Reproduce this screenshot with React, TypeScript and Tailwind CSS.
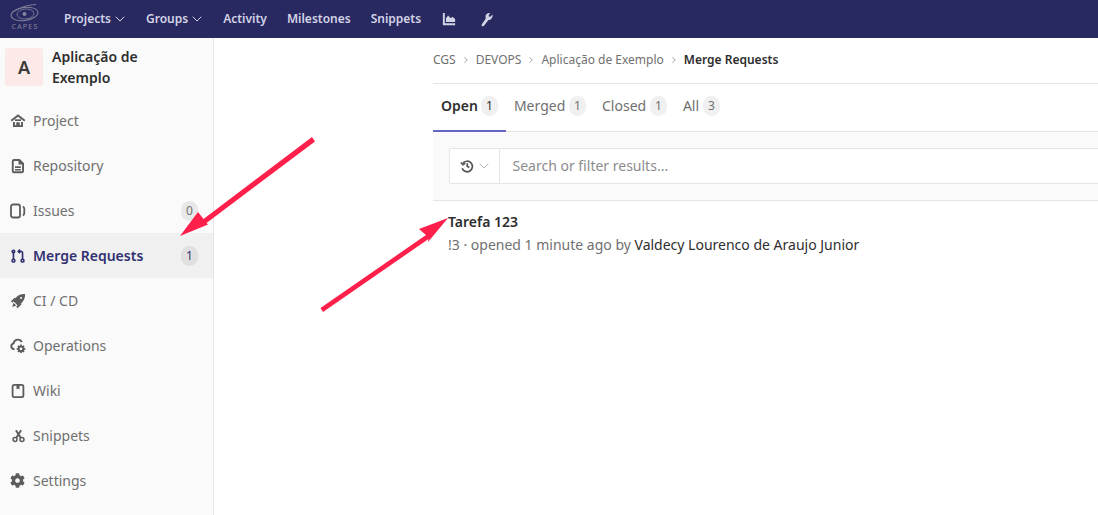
import { ChevronDown, ChevronRight } from 'lucide-react'
import { FaCog } from 'react-icons/fa'
import type { ReactNode } from 'react'

const font = "font-['Noto_Sans',sans-serif]"

const HomeIcon = () => (
  <svg width="16" height="16" viewBox="0 0 16 16" fill="currentColor">
    <path d="M8 1.200.6 7l1.200 1.500L8 3.800l6.200 4.700L15.400 7 8 1.200Z" />
    <path d="M3 9h1.900v3.200H6.300V9.300h3.400v2.900h1.400V9H13v5H3V9Z" />
    <path d="M5 6.300h6v1.700H5z" />
  </svg>
)

const DocIcon = () => (
  <svg width="16" height="16" viewBox="0 0 16 16" fill="currentColor">
    <path d="M4 1h5.800L14 5.200V13a2.200 2.200 0 0 1-2.200 2.200H4A2.200 2.200 0 0 1 1.800 13V3.200A2.200 2.200 0 0 1 4 1Zm0 1.900a.4.400 0 0 0-.3.300V13a.4.400 0 0 0 .3.300h7.800a.4.400 0 0 0 .3-.3V6.500H8.500V2.900H4ZM5 8.200h5.800v1.700H5V8.200Zm0 2.700h5.800v1.500H5v-1.500Z" fillRule="evenodd" />
  </svg>
)

const IssuesIcon = () => (
  <svg width="16" height="16" viewBox="0 0 16 16" fill="none" stroke="currentColor" strokeWidth="1.800">
    <rect x="1" y="1.500" width="9" height="13" rx="2" />
    <path d="M12.800 3.500c1 .5 1.500 1.200 1.500 2.200v4.600c0 1-.5 1.700-1.500 2.200" />
  </svg>
)

const MergeIcon = () => (
  <svg width="14" height="16" viewBox="0 0 16 16" fill="none" stroke="currentColor" strokeWidth="1.900" className="ml-px">
    <circle cx="2.800" cy="13.300" r="1.600" />
    <circle cx="13.200" cy="13.300" r="1.600" />
    <circle cx="2.800" cy="2.800" r="1.400" />
    <path d="M2.800 4.200v7.500M13.200 11.700V4.500a1.700 1.700 0 0 0-1.700-1.700H8.500" />
    <path d="M10.300.8 8.300 2.800l2 2" />
  </svg>
)

const RocketIcon = () => (
  <svg width="16" height="16" viewBox="0 0 16 16" fill="currentColor">
    <path d="M15 1c-3.500-.3-6.500 1-8.500 3L3 7.800 8.200 13 12 9.500c2-2 3.300-5 3-8.500Zm-4 3a1 1 0 1 1 0 2 1 1 0 0 1 0-2Z" fillRule="evenodd" />
    <path d="M.8 8.500 4.500 4.800l1.300.2L2.700 9.800.8 8.500ZM6.200 13.300l5-3.200.2 1.300L7.500 15.200 6.200 13.300ZM3.500 9.800 6.200 12.500 2.300 14 3.500 9.800Z" />
  </svg>
)

const CloudGearIcon = () => (
  <svg width="16" height="16" viewBox="0 0 16 16">
    <path d="M4.500 11.200H4a3 3 0 0 1-.4-5.900A4.300 4.300 0 0 1 11.800 4.200" fill="none" stroke="currentColor" strokeWidth="1.900" />
    <circle cx="11" cy="10.800" r="2.400" fill="none" stroke="currentColor" strokeWidth="2" />
    <path d="M11 6.500v1.500M11 13.600v1.500M6.700 10.800h1.500M13.800 10.800h1.500M8 7.800l1 1M13 12.800l1 1M8 13.800l1-1M13 8.800l1-1" stroke="currentColor" strokeWidth="1.700" />
  </svg>
)

const BookIcon = () => (
  <svg width="16" height="16" viewBox="0 0 16 16" fill="none" stroke="currentColor">
    <rect x="2.600" y="1.900" width="10.800" height="12.200" rx="1.600" strokeWidth="1.800" />
    <path d="M6.500 2h3v4.500L8 5.400 6.500 6.500z" fill="currentColor" stroke="none" />
  </svg>
)

const ScissorsIcon = () => (
  <svg width="13" height="14" viewBox="0 0 16 16" fill="none" stroke="currentColor" strokeWidth="1.900" className="ml-[1.500px]">
    <circle cx="3.700" cy="12.300" r="2.400" />
    <circle cx="12.300" cy="12.300" r="2.400" />
    <path d="M4.800 1 10.800 10.300M11.200 1 5.200 10.300" strokeWidth="2.300" />
  </svg>
)

const ChartIcon = () => (
  <svg width="14" height="14" viewBox="0 0 16 16" fill="currentColor">
    <path d="M1 1h2.200v11.800H15V15H1V1Z" />
    <path d="M4.500 11.500V7l2.500-3 3 3 2-1.500 3 2.500v3.500H4.500Z" />
  </svg>
)

const WrenchIcon = () => (
  <svg width="12" height="15" viewBox="0 0 12 15" fill="currentColor">
    <path d="M11.500 2.500 9 5 7.500 4 9 1C7 .5 4.500 2 4.500 4.500c0 1 .3 1.500.3 2L.7 12.500c-.7 1.300 1 2.500 2.100 1.500L7.500 8c2.500.3 4.500-2.500 4-5.500Z" />
  </svg>
)

const HistoryIcon = () => (
  <svg width="14" height="14" viewBox="0 0 16 16" fill="none" stroke="currentColor" strokeWidth="2">
    <path d="M3.200 5.200A6 6 0 1 1 2.500 10.500" />
    <path d="M.9 3.900 3.400 6.500 6.100 4.900" strokeWidth="1.700" />
    <path d="M8.300 4.800V8.300l2.400 1.400" />
  </svg>
)

const CapesLogo = () => (
  <svg width="30" height="18" viewBox="0 0 30 18" fill="none" className="text-[#83839c]" stroke="currentColor">
    <ellipse cx="14.500" cy="10" rx="13.500" ry="6.500" strokeWidth="1" transform="rotate(-8 14.500 10)" />
    <ellipse cx="15.500" cy="10" rx="8.500" ry="5" strokeWidth="0.800" transform="rotate(-5 15.500 10)" />
    <path d="M5 7C12 2 20 1 26 .5" strokeWidth="0.900" />
    <circle cx="14.500" cy="10" r="2" fill="currentColor" stroke="none" />
  </svg>
)

const navItems: { label: string; icon: ReactNode; count?: number; active?: boolean }[] = [
  { label: 'Project', icon: <HomeIcon /> },
  { label: 'Repository', icon: <DocIcon /> },
  { label: 'Issues', icon: <IssuesIcon />, count: 0 },
  { label: 'Merge Requests', icon: <MergeIcon />, count: 1, active: true },
  { label: 'CI / CD', icon: <RocketIcon /> },
  { label: 'Operations', icon: <CloudGearIcon /> },
  { label: 'Wiki', icon: <BookIcon /> },
  { label: 'Snippets', icon: <ScissorsIcon /> },
  { label: 'Settings', icon: <FaCog size={15} /> },
]

const tabs = [
  { label: 'Open', count: 1, active: true },
  { label: 'Merged', count: 1 },
  { label: 'Closed', count: 1 },
  { label: 'All', count: 3 },
]

const crumbs = ['CGS', 'DEVOPS', 'Aplicação de Exemplo']

const Sidebar = () => (
  <aside className="w-[214px] shrink-0 bg-[#fafafa] border-r border-[#e5e5e5]">
    <div className="flex gap-[9px] pl-[5px] pt-[10px] h-[60px]">
      <div className="w-[38px] h-[38px] rounded-[3px] bg-[#fbeae8] flex items-center justify-center text-lg font-semibold text-[#3a3a3a]">
        A
      </div>
      <div className="-mt-[2px] text-sm leading-[21px] font-semibold text-[#2e2e2e]">
        Aplicação de
        <br />
        Exemplo
      </div>
    </div>
    <nav className="flex flex-col">
      {navItems.map((item) => (
        <div
          key={item.label}
          className={
            item.active
              ? 'h-[45px] flex items-center pl-[10px] pr-[15px] bg-[#f0f0f0] text-[#303072] font-semibold text-sm'
              : 'h-[45px] flex items-center pl-[10px] pr-[15px] text-[#707070] text-sm'
          }
        >
          <span className={item.active ? 'w-[23px] flex items-center text-[#303072]' : 'w-[23px] flex items-center text-[#5c5c5c]'}>
            {item.icon}
          </span>
          <span className="flex-1">{item.label}</span>
          {item.count !== undefined && (
            <span className={item.active ? 'w-[17px] h-5 rounded-full bg-[#e0e0e0] text-xs font-normal flex items-center justify-center' : 'w-[17px] h-5 rounded-full bg-[#e8e8e8] text-xs flex items-center justify-center'}>
              {item.count}
            </span>
          )}
        </div>
      ))}
    </nav>
  </aside>
)

const Main = () => (
  <main className="flex-1 min-w-0 pl-[219px]">
    <div className="h-[46px] pb-[2px] flex items-center gap-[5px] border-b border-[#e5e5e5] text-xs">
      {crumbs.map((c) => (
        <span key={c} className="flex items-center gap-[5px] text-[#707070]">
          {c}
          <ChevronRight size={10} className="text-[#8f8f8f]" />
        </span>
      ))}
      <span className="font-semibold text-[#2e2e2e]">Merge Requests</span>
    </div>
    <div className="h-[48px] flex border-b border-[#e5e5e5] text-sm">
      {tabs.map((t) => (
        <div
          key={t.label}
          className={
            t.active
              ? 'flex items-center gap-[3px] px-2 pb-[2px] border-b-2 border-[#6666c4] -mb-px font-semibold text-[#2e2e2e]'
              : 'flex items-center gap-[3.750px] px-2 pb-[4px] -mb-px text-[#707070]'
          }
        >
          {t.label}
          <span className={t.active ? 'w-[17px] h-5 rounded-full bg-[#f0f0f0] text-xs font-normal text-[#2e2e2e] flex items-center justify-center' : 'w-[17px] h-5 rounded-full bg-[#f0f0f0] text-xs text-[#707070] flex items-center justify-center'}>
            {t.count}
          </span>
        </div>
      ))}
    </div>
    <div className="h-[69px] bg-[#fafafa] border-b border-[#e5e5e5] pl-4 pt-4">
      <div className="h-[36px] flex bg-white border border-[#e5e5e5] border-r-0 rounded-l-[2px]">
        <div className="w-[50px] shrink-0 flex items-center pl-[10px] gap-[2px] border-r border-[#e5e5e5] text-[#555]">
          <HistoryIcon />
          <ChevronDown size={16} strokeWidth={1.5} className="text-[#b5b5b5]" />
        </div>
        <div className="pl-[12.500px] flex items-center text-sm text-[#8c8c8c]">Search or filter results...</div>
      </div>
    </div>
    <div className="pl-[15px] pt-[11px]">
      <div className="text-sm leading-[20px] font-semibold text-[#2e2e2e]">Tarefa 123</div>
      <div className="mt-[3px] text-sm leading-[20px] text-[#707070]">
        !3 · opened 1 minute ago by <span className="text-[#2e2e2e]">Valdecy Lourenco de Araujo Junior</span>
      </div>
    </div>
  </main>
)

const Arrows = () => (
  <svg className="absolute inset-0 pointer-events-none" width="1098" height="515" viewBox="0 0 1098 515">
    <g fill="#ff1f4b" stroke="none">
      <path d="M180 236 198 212 203.500 219 312 137 315 141.500 206.500 223 208 224.500Z" />
      <path d="M448 218 419 229 426 235 320.500 308 323 312 428.500 239 428 242Z" />
    </g>
  </svg>
)

const App = () => {
  return (
    <div className={`${font} relative w-[1098px] h-[515px] overflow-hidden bg-white flex flex-col`}>
      <header className="h-[38px] shrink-0 bg-[#292961] flex items-center pl-[10px] text-[#d3d3e6] text-xs font-semibold">
        <div className="w-[30px] h-[34px] mr-6 flex flex-col items-center pt-[2px]">
          <CapesLogo />
          <span className="text-[7px] leading-[9px] font-normal tracking-[1.200px] text-[#83839c]">CAPES</span>
        </div>
        <div className="flex items-center gap-5">
          <span className="flex items-center gap-[3px]">Projects <ChevronDown size={16} strokeWidth={1.5} className="-mx-[2px]" /></span>
          <span className="flex items-center gap-[3px]">Groups <ChevronDown size={16} strokeWidth={1.5} className="-mx-[2px]" /></span>
          <span>Activity</span>
          <span>Milestones</span>
          <span>Snippets</span>
          <span className="ml-px mr-[5px]"><ChartIcon /></span>
          <WrenchIcon />
        </div>
      </header>
      <div className="flex flex-1 min-h-0">
        <Sidebar />
        <Main />
      </div>
      <Arrows />
    </div>
  )
}

export default App
